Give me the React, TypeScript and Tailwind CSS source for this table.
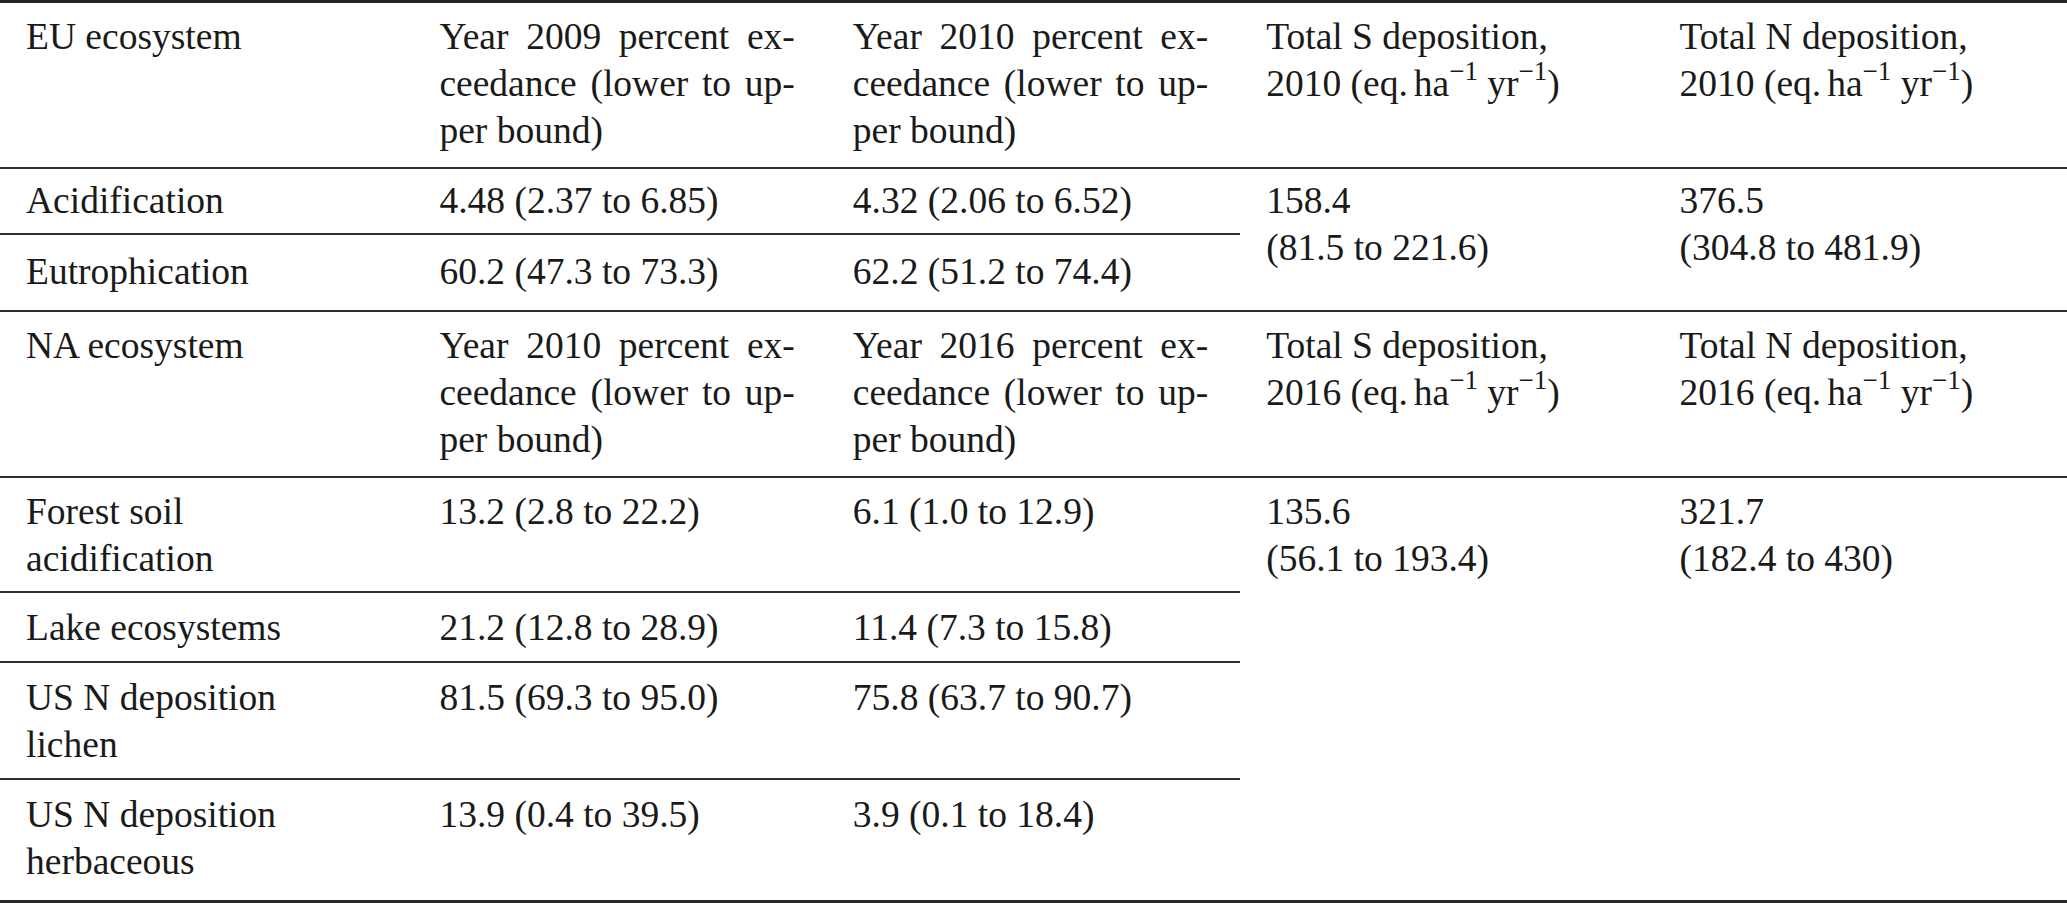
import React from "react";

const Sup = ({ children }: { children: React.ReactNode }) => (
  <span className="relative -top-[0.6em] text-[0.72em] leading-none">{children}</span>
);

const Unit = ({ year }: { year: string }) => (
  <>
    {year} (eq.<span className="inline-block w-[6px]" />ha<Sup>−1</Sup> yr<Sup>−1</Sup>)
  </>
);

const J = ({ children }: { children: React.ReactNode }) => (
  <div className="text-justify [text-align-last:justify]">{children}</div>
);

const Head = ({ y }: { y: string }) => (
  <>
    <J>Year {y} percent ex-</J>
    <J>ceedance (lower to up-</J>
    <div>per bound)</div>
  </>
);

const cell = "align-top pl-[26px] pr-[32px] pt-[11px]";
const cellE = "align-top pl-[26px] pr-[32px] pt-[13px]";
const cellH = "align-top pl-[26px] pr-[32px] pt-[10px]";
const cellA = "align-top pl-[26px] pr-[32px] pt-[8px]";
const line = "border-b-2 border-[#2e2e2e]";
const bottom = "border-b-[3px] border-[#262626]";

export default function App() {
  return (
    <div className="w-[2067px] h-[903px] bg-white overflow-hidden">
      <table
        className="w-[2067px] table-fixed border-collapse text-[37.5px] leading-[47.2px] text-[#1a1a1a] border-t-[3px] border-[#262626]"
        style={{ fontFamily: '"Liberation Serif", "Times New Roman", serif' }}
      >
        <colgroup>
          <col className="w-1/5" />
          <col className="w-1/5" />
          <col className="w-1/5" />
          <col className="w-1/5" />
          <col className="w-1/5" />
        </colgroup>
        <tbody>
          <tr className="h-[166px]">
            <td className={`${cellH} ${line}`}>EU ecosystem</td>
            <td className={`${cellH} ${line}`}><Head y="2009" /></td>
            <td className={`${cellH} ${line}`}><Head y="2010" /></td>
            <td className={`${cellH} ${line}`}>
              <div>Total S deposition,</div>
              <div><Unit year="2010" /></div>
            </td>
            <td className={`${cellH} ${line}`}>
              <div>Total N deposition,</div>
              <div><Unit year="2010" /></div>
            </td>
          </tr>
          <tr className="h-[66px]">
            <td className={`${cellA} ${line}`}>Acidification</td>
            <td className={`${cellA} ${line}`}>4.48 (2.37 to 6.85)</td>
            <td className={`${cellA} ${line}`}>4.32 (2.06 to 6.52)</td>
            <td rowSpan={2} className={`${cellA} ${line}`}>
              <div>158.4</div>
              <div>(81.5 to 221.6)</div>
            </td>
            <td rowSpan={2} className={`${cellA} ${line}`}>
              <div>376.5</div>
              <div>(304.8 to 481.9)</div>
            </td>
          </tr>
          <tr className="h-[77px]">
            <td className={`${cellE} ${line}`}>Eutrophication</td>
            <td className={`${cellE} ${line}`}>60.2 (47.3 to 73.3)</td>
            <td className={`${cellE} ${line}`}>62.2 (51.2 to 74.4)</td>
          </tr>
          <tr className="h-[166px]">
            <td className={`${cellH} ${line}`}>NA ecosystem</td>
            <td className={`${cellH} ${line}`}><Head y="2010" /></td>
            <td className={`${cellH} ${line}`}><Head y="2016" /></td>
            <td className={`${cellH} ${line}`}>
              <div>Total S deposition,</div>
              <div><Unit year="2016" /></div>
            </td>
            <td className={`${cellH} ${line}`}>
              <div>Total N deposition,</div>
              <div><Unit year="2016" /></div>
            </td>
          </tr>
          <tr className="h-[115px]">
            <td className={`${cellH} ${line}`}>
              <div>Forest soil</div>
              <div>acidification</div>
            </td>
            <td className={`${cellH} ${line}`}>13.2 (2.8 to 22.2)</td>
            <td className={`${cellH} ${line}`}>6.1 (1.0 to 12.9)</td>
            <td rowSpan={4} className={`${cellH} ${bottom}`}>
              <div>135.6</div>
              <div>(56.1 to 193.4)</div>
            </td>
            <td rowSpan={4} className={`${cellH} ${bottom}`}>
              <div>321.7</div>
              <div>(182.4 to 430)</div>
            </td>
          </tr>
          <tr className="h-[70px]">
            <td className={`${cell} ${line}`}>Lake ecosystems</td>
            <td className={`${cell} ${line}`}>21.2 (12.8 to 28.9)</td>
            <td className={`${cell} ${line}`}>11.4 (7.3 to 15.8)</td>
          </tr>
          <tr className="h-[117px]">
            <td className={`${cell} ${line}`}>
              <div>US N deposition</div>
              <div>lichen</div>
            </td>
            <td className={`${cell} ${line}`}>81.5 (69.3 to 95.0)</td>
            <td className={`${cell} ${line}`}>75.8 (63.7 to 90.7)</td>
          </tr>
          <tr className="h-[123px]">
            <td className={`${cell} ${bottom}`}>
              <div>US N deposition</div>
              <div>herbaceous</div>
            </td>
            <td className={`${cell} ${bottom}`}>13.9 (0.4 to 39.5)</td>
            <td className={`${cell} ${bottom}`}>3.9 (0.1 to 18.4)</td>
          </tr>
        </tbody>
      </table>
    </div>
  );
}
